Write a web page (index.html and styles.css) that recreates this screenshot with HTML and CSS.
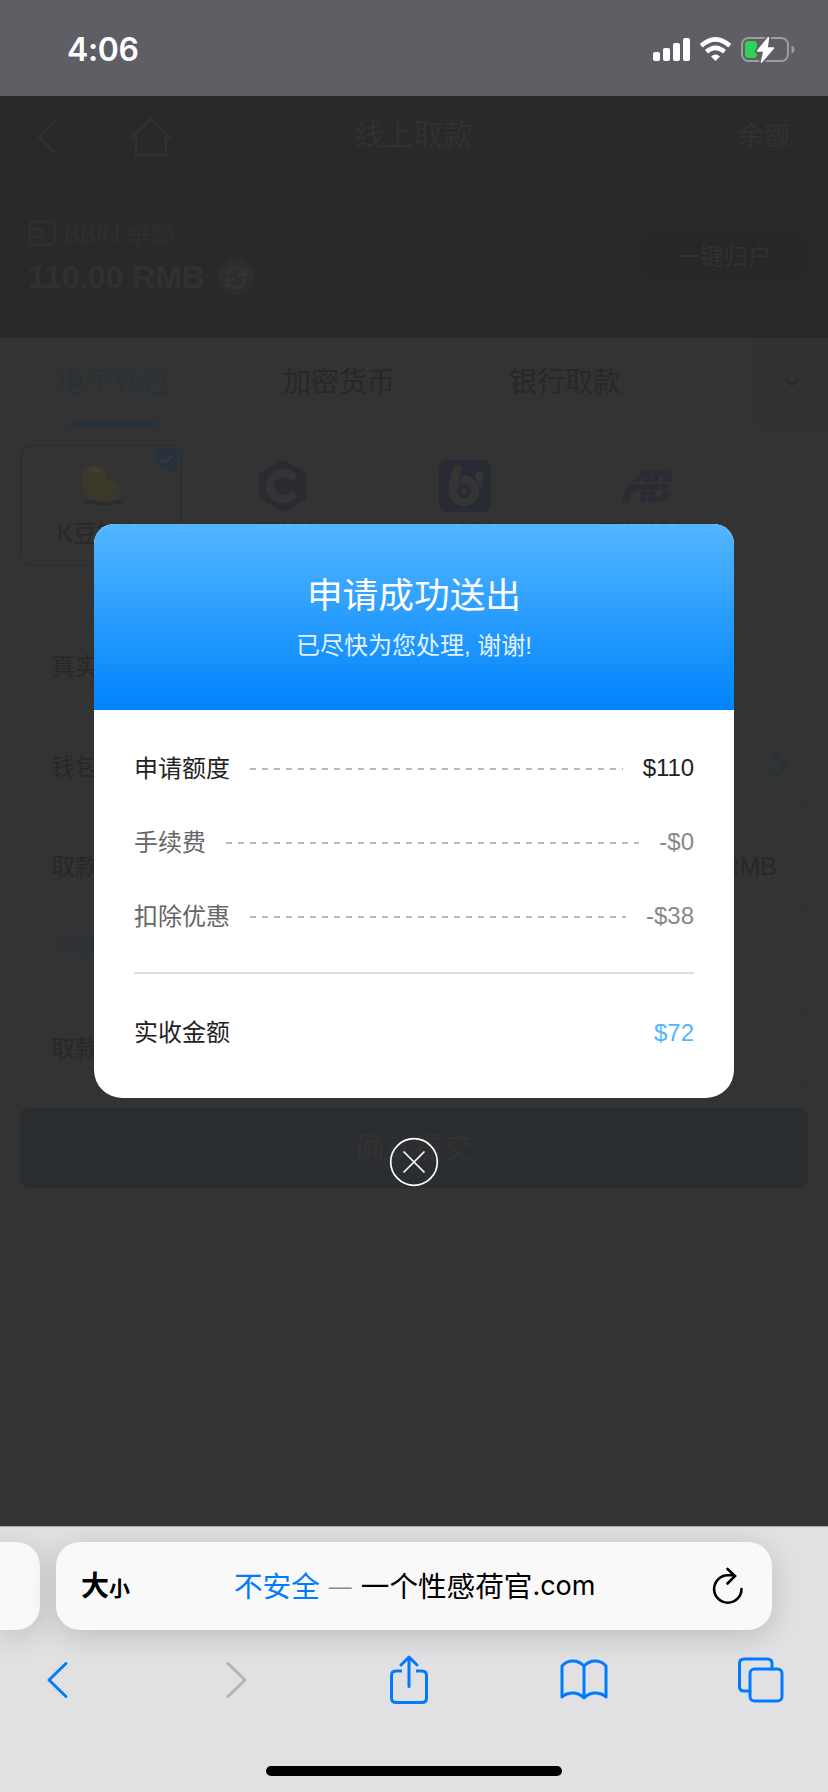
FILE: index.html
```html
<!DOCTYPE html>
<html lang="zh-CN">
<head>
<meta charset="utf-8">
<title>线上取款</title>
<link rel="stylesheet" href="styles.css">
</head>
<body>
<div class="phone">
  <header class="status">
    <span class="time">4:06</span>
    <svg class="status-icons" width="142" height="28" viewBox="0 0 142 28">
      <g fill="#fff">
        <rect x="0" y="15" width="7" height="9" rx="2"/>
        <rect x="10" y="11" width="7" height="13" rx="2"/>
        <rect x="20" y="6" width="7" height="18" rx="2"/>
        <rect x="30" y="1" width="7" height="23" rx="2"/>
      </g>
      <g fill="none" stroke="#fff" stroke-width="4.6">
        <path d="M48.200 8.800Q62.500-4 76.800 8.800"/>
        <path d="M53.500 14.800Q62.500 7 71.500 14.800"/>
      </g>
      <path d="M58 19.500Q62.500 15.500 67 19.500L62.500 24Z" fill="#fff"/>
      <rect x="89" y="1" width="46" height="23" rx="6.500" fill="none" stroke="#9c9da0" stroke-width="2"/>
      <path d="M138.500 8.500q3 1 3 4t-3 4z" fill="#9c9da0"/>
      <rect x="92" y="4" width="12" height="17" rx="3.500" fill="#30d158"/>
      <path d="M115.500 0.500L104.500 14h6.500L108.500 25L120.500 11h-6.500Z" fill="#fff" stroke="#5e5f64" stroke-width="5" stroke-linejoin="round"/>
      <path d="M115.500 0.500L104.500 14h6.500L108.500 25L120.500 11h-6.500Z" fill="#fff" stroke="#fff" stroke-width="1.600" stroke-linejoin="round"/>
    </svg>
  </header>

  <main class="page">
    <section class="hero">
      <nav class="nav">
        <div class="nav-left">
          <svg width="20" height="36" viewBox="0 0 20 36"><path d="M18 2L2 18L18 34" class="line"/></svg>
          <svg width="42" height="40" viewBox="0 0 42 40"><path d="M6 20H2L21 2L40 20H36V38H6Z" class="line"/></svg>
        </div>
        <h1 class="nav-title">线上取款</h1>
        <span class="nav-right">余额</span>
      </nav>
      <div class="balance">
        <div>
          <div class="wallet">
            <svg width="28" height="26" viewBox="0 0 28 26"><rect x="1.500" y="1.500" width="25" height="23" rx="4" class="line thin"/><path d="M2 9H11a4 4 0 0 1 0 8H2" class="line thin"/><circle cx="10" cy="13" r="1.200" fill="#313131"/></svg>
            <span>BBIN 余额</span>
          </div>
          <div class="amount">
            <strong>110.00 RMB</strong>
            <svg width="36" height="36" viewBox="0 0 36 36"><circle cx="18" cy="18" r="18" fill="#2e2e2e"/><path d="M9 17a9 9 0 0 1 16-5M27 9v7h-7M27 20a9 9 0 0 1-16 5M9 28v-7h7" fill="none" stroke="#343434" stroke-width="3"/></svg>
          </div>
        </div>
        <span class="collect">一键归户</span>
      </div>
    </section>

    <section class="tabs">
      <span class="tab active">电子钱包</span>
      <span class="tab">加密货币</span>
      <span class="tab">银行取款</span>
      <span class="more"><svg width="16" height="12" viewBox="0 0 16 12"><path d="M2 2L8 8L14 2" fill="none" stroke="#2b2b2b" stroke-width="3"/></svg></span>
    </section>

    <section class="wallets">
      <div class="card selected">
        <svg class="check" width="24" height="26" viewBox="0 0 24 26"><path d="M0 0H18Q24 0 24 6V26Q4 24 0 0Z" fill="#29323a"/><path d="M7 11l4 4 7-7" fill="none" stroke="#333a40" stroke-width="2"/></svg>
        <svg class="logo" width="52" height="52" viewBox="0 0 52 52"><ellipse cx="28" cy="42" rx="20" ry="3" fill="#2c2c2c"/><path d="M6 19C6 10 13 5 19 5C27 5 31 10 31 17C31 22 45 21 45 31C45 38 38 42 30 42C17 42 6 33 6 19Z" fill="#3b3829"/><ellipse cx="19" cy="10" rx="6" ry="3" fill="#403e33"/></svg>
        <span>K豆钱包</span>
      </div>
      <div class="card">
        <svg class="logo" width="52" height="52" viewBox="0 0 52 52"><path d="M26 0L49.500 13V39L26 52L2.500 39V13Z" fill="#2b2a31"/><path d="M37.500 19A13.200 13.200 0 1 0 37.500 33" fill="none" stroke="#343434" stroke-width="8.500"/></svg>
        <span>C可钱包</span>
      </div>
      <div class="card">
        <svg class="logo" width="52" height="52" viewBox="0 0 52 52"><rect width="52" height="52" rx="8" fill="#282b34"/><path d="M40.500 15L37 34" stroke="#353535" stroke-width="8.500" stroke-linecap="round"/><circle cx="25" cy="31" r="16" fill="#353535" stroke="#282b34" stroke-width="1.500"/><path d="M18 9.500L13.500 30" stroke="#353535" stroke-width="9" stroke-linecap="round"/><path d="M22.500 12L19.500 24" stroke="#282b34" stroke-width="1.200"/><circle cx="25" cy="31" r="5" fill="#353535" stroke="#282b34" stroke-width="4"/></svg>
        <span>OB钱包</span>
      </div>
      <div class="card">
        <svg class="logo" width="52" height="52" viewBox="0 0 52 52"><g fill="#2c2b33"><path d="M10 23L22 10H31L28 22H22L24 16L16 22Z"/><path d="M33 10H43Q53 12 52 20L50 22H41Q45 16 40 16H38L37 22H30Z"/><path d="M0 42Q2 24 18 24H49Q47 29.500 43 29.500H18Q9 31 7 42Z"/><path d="M21 31H27L24 42H18Z"/><path d="M29 31H35L34 37H39Q42 35 42 31H50Q49 42 38 42H26Z"/></g></svg>
        <span>百博钱包</span>
      </div>
    </section>

    <section class="form">
      <div class="field plain"><span class="label">真实姓名</span></div>
      <div class="field"><span class="label">钱包地址</span><svg class="go" width="18" height="26" viewBox="0 0 18 26"><path d="M3 3L14 13L3 23" fill="none" stroke="#283239" stroke-width="4.500"/></svg></div>
      <div class="group">
        <div class="field inner"><span class="label">取款金额</span><span class="unit">RMB</span></div>
        <div class="detail">详细说明</div>
      </div>
      <div class="field last"><span class="label">取款密码</span></div>
      <div class="submit">确认提交</div>
    </section>
  </main>

  <footer class="browser">
    <div class="addresses">
      <div class="previous"></div>
      <div class="address">
        <span class="aa">大<small>小</small></span>
        <span class="url"><b>不安全</b><i>—</i>一个性感荷官<em>.com</em></span>
        <svg class="refresh" width="32" height="38" viewBox="0 0 32 38"><path d="M29.500 22A13.700 13.700 0 1 1 15.800 8.300H22" class="reload"/><path d="M15.500 2L23 9L15.500 16.500" class="reload"/></svg>
      </div>
    </div>
    <div class="tools">
      <svg width="24" height="40" viewBox="0 0 24 40"><path d="M21 3.500L4 20L21 36.500" class="tool"/></svg>
      <svg class="forward" width="24" height="40" viewBox="0 0 24 40"><path d="M3 3.500L20 20L3 36.500" class="tool off"/></svg>
      <svg class="share" width="40" height="50" viewBox="0 0 40 50"><path d="M13 16H7Q2.500 16 2.500 20.500V43Q2.500 47.500 7 47.500H33Q37.500 47.500 37.500 43V20.500Q37.500 16 33 16H27" class="tool butt"/><path d="M20 31.500V2.500M12 10L20 2L28 10" class="tool"/></svg>
      <svg class="book" width="50" height="42" viewBox="0 0 50 42"><path d="M25 7Q20 2 14 2Q7 2 3 7V38Q7 34 14 34Q20 34 25 39Q30 34 36 34Q43 34 47 38V7Q43 2 36 2Q30 2 25 7V38" class="tool"/></svg>
      <svg class="pages" width="48" height="48" viewBox="0 0 48 48"><rect x="13" y="13" width="32" height="32" rx="4.500" class="tool"/><path d="M13 35H7Q2.500 35 2.500 30.500V7.500Q2.500 3 7 3H30.500Q35 3 35 7.500V13" class="tool"/></svg>
    </div>
    <div class="home-bar"></div>
  </footer>

  <div class="overlay">
    <div class="dialog">
      <div class="dialog-head">
        <h2>申请成功送出</h2>
        <p>已尽快为您处理, 谢谢!</p>
      </div>
      <div class="dialog-body">
        <div class="row strong"><span class="label">申请额度</span><i class="dash"></i><span class="value tight">$110</span></div>
        <div class="row"><span class="label">手续费</span><i class="dash"></i><span class="value">-$0</span></div>
        <div class="row"><span class="label">扣除优惠</span><i class="dash"></i><span class="value">-$38</span></div>
        <div class="row total"><span class="label">实收金额</span><span class="value">$72</span></div>
      </div>
    </div>
    <svg class="close" width="50" height="50" viewBox="0 0 50 50"><circle cx="25" cy="25" r="23.300"/><path d="M14.500 14.500L35.500 35.500M35.500 14.500L14.500 35.500"/></svg>
  </div>
</div>
</body>
</html>
```

FILE: styles.css
```css
* { box-sizing: border-box; }
body { margin: 0; font-family: "Liberation Sans", "Noto Sans CJK SC", sans-serif; font-weight: 400; }
h1, h2, p { margin: 0; font-weight: 400; }
svg { display: block; flex: none; }

.phone { position: relative; width: 828px; height: 1792px; overflow: hidden; display: flex; flex-direction: column; background: #333; }

.status { height: 96px; background: #5e5f64; display: flex; justify-content: space-between; align-items: center; padding: 3px 33px 0 67px; color: #fff; }
.time { font: 600 32px/40px Inter, sans-serif; letter-spacing: -0.4px; }
.status-icons { margin-top: 3px; }

.page { height: 1430px; background: #333; color: #282828; }
.hero { height: 242px; background: #292929; color: #313131; }
.nav { height: 76px; display: grid; grid-template-columns: 1fr auto 1fr; align-items: center; padding: 2px 38px 0 37px; }
.nav-left { display: flex; align-items: center; gap: 73px; padding-top: 3px; }
.nav-title { font-size: 29.500px; line-height: 40px; }
.nav-right { font-size: 26px; text-align: right; padding-bottom: 4px; }
.line { fill: none; stroke: #313131; stroke-width: 2.500; }
.thin { stroke-width: 2; }
.balance { display: flex; justify-content: space-between; padding: 42px 20px 0 28px; }
.wallet { display: flex; align-items: center; gap: 8px; height: 36px; margin-top: 1px; font-size: 24px; color: #2f2f2f; }
.wallet span { padding-bottom: 4px; }
.amount { display: flex; align-items: center; gap: 13px; height: 48px; font-size: 32px; margin-top: 2px; }
.amount strong { width: 177px; white-space: nowrap; letter-spacing: -0.1px; font-weight: 700; padding-top: 1px; }
.collect { width: 169px; height: 52px; margin-top: 16px; border-radius: 26px; background: #272727; font-size: 24px; line-height: 53px; text-align: center; }

.tabs { height: 90px; display: flex; border-bottom: 1px solid #313131; }
.tab { width: 226px; text-align: center; font-size: 28px; line-height: 90px; position: relative; }
.active { color: #28323a; }
.active::after { content: ""; position: absolute; left: 68px; top: 84px; width: 90px; height: 4px; background: #27323a; }
.more { margin-left: 77px; flex: 1; background: #323232; display: flex; align-items: center; justify-content: center; }

.wallets { height: 158px; border-bottom: 1px solid #313131; padding: 16px 20px 0; display: grid; grid-template-columns: repeat(4, 162px); gap: 20px; align-items: start; }
.card { position: relative; height: 122px; border: 1px solid #313131; border-radius: 10px; display: flex; flex-direction: column; align-items: center; padding-top: 15px; font-size: 24px; line-height: 36px; }
.selected { border: 2px solid #293138; padding-top: 14px; }
.logo { margin-bottom: 4px; }
.check { position: absolute; right: 2px; top: 2px; }

.form { padding: 40px 20px 0; font-size: 24px; }
.field { height: 80px; margin-bottom: 21px; border: 1px solid #303030; border-radius: 8px; padding: 0 30px; display: flex; justify-content: space-between; align-items: center; }
.label { padding-bottom: 4px; }
.plain { border-color: #323232; margin-bottom: 20px; }
.last { margin-bottom: 20px; }
.go { margin-right: -12px; }
.group { height: 162px; margin-bottom: 19px; border: 1px solid #303030; border-radius: 8px; }
.inner { height: 78px; margin: 0; border: 0; border-bottom: 1px solid #313131; border-radius: 0; }
.unit { font-size: 25px; }
.detail { padding: 0 30px; line-height: 79px; color: #2a323a; }
.submit { height: 80px; border-radius: 8px; background: #2a2e31; color: #353130; font-size: 29.500px; line-height: 80px; text-align: center; }

.browser { height: 266px; background: #e1e1e3; border-top: 1px solid #aaa; padding-top: 15px; overflow: hidden; }
.addresses { display: flex; gap: 16px; }
.previous { width: 40px; height: 88px; background: #f9f9f9; border-radius: 0 24px 24px 0; box-shadow: 0 6px 30px rgba(0, 0, 0, 0.16); }
.address { width: 716px; height: 88px; background: #f9f9f9; border-radius: 24px; box-shadow: 0 6px 30px rgba(0, 0, 0, 0.16); display: flex; align-items: center; padding: 0 28px 0 25px; color: #000; }
.aa { width: 64px; font-size: 28px; font-weight: 700; white-space: nowrap; padding-bottom: 4px; }
.aa small { font-size: 21px; }
.url { font-size: 28.600px; display: flex; align-items: center; white-space: nowrap; margin-left: 89px; padding-bottom: 4px; }
.url b { font-weight: 400; color: #007aff; }
.url i { font-style: normal; color: #8a8a8e; font-size: 23px; margin: 4px 9px 0; }
.url em { font-style: normal; font-family: Inter, sans-serif; font-size: 27px; padding-top: 2px; }
.refresh { margin-left: auto; }
.reload { fill: none; stroke: #000; stroke-width: 2.600; stroke-linecap: round; }
.tools { height: 100px; display: flex; align-items: center; padding-left: 45px; }
.forward { margin-left: 156px; }
.share { margin-left: 140px; }
.book { margin-left: 130px; }
.pages { margin-left: 128px; }
.tool { fill: none; stroke: #007aff; stroke-width: 3; stroke-linecap: round; stroke-linejoin: round; }
.butt { stroke-linecap: butt; }
.off { stroke: #b4b4b5; }
.home-bar { width: 296px; height: 10px; margin: 36px auto 0; border-radius: 5px; background: #000; }

.overlay { position: absolute; inset: 524px 0 auto 0; display: flex; flex-direction: column; align-items: center; }
.dialog { width: 640px; height: 574px; border-radius: 20px 20px 28px 28px; background: #fff; overflow: hidden; }
.dialog-head { height: 186px; padding-top: 47px; background: linear-gradient(#53b6ff, #0084fc); color: #fff; text-align: center; }
.dialog-head h2 { font-size: 35.700px; line-height: 50px; }
.dialog-head p { font-size: 24px; line-height: 36px; margin-top: 7px; color: #e3f1ff; font-weight: 400; }
.dialog-body { padding: 21px 40px 0; }
.row { height: 74px; display: flex; align-items: center; font-size: 24px; color: #666; }
.row .value { color: #888; }
.row .tight { letter-spacing: -0.1px; }
.dash { flex: 1; height: 2px; margin: 2px 20px 0; background: repeating-linear-gradient(90deg, #b8b8b8 0 6px, transparent 6px 12px); }
.strong, .total, .row.strong .value { color: #222; }
.total { justify-content: space-between; height: 119px; margin-top: 19px; border-top: 2px solid #ddd; }
.row.total .value { color: #53b6ff; }
.close { margin-top: 39px; fill: none; stroke: #fff; stroke-width: 1.700; }
```
